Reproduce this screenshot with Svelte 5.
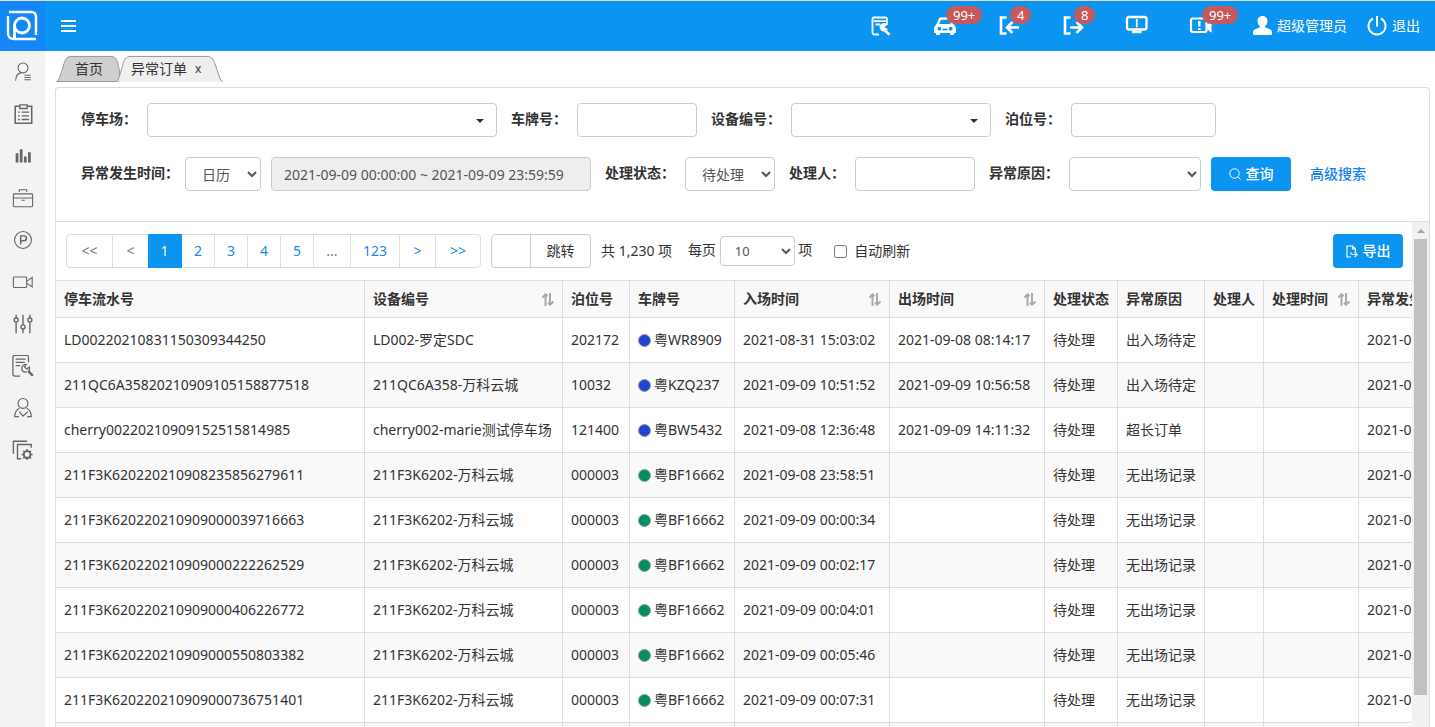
<script>
  const orders = [
    ['LD00220210831150309344250', 'LD002-罗定SDC', '202172', 'blue', '粤WR8909', '2021-08-31 15:03:02', '2021-09-08 08:14:17', '出入场待定'],
    ['211QC6A35820210909105158877518', '211QC6A358-万科云城', '10032', 'blue', '粤KZQ237', '2021-09-09 10:51:52', '2021-09-09 10:56:58', '出入场待定'],
    ['cherry00220210909152515814985', 'cherry002-marie测试停车场', '121400', 'blue', '粤BW5432', '2021-09-08 12:36:48', '2021-09-09 14:11:32', '超长订单'],
    ['211F3K620220210908235856279611', '211F3K6202-万科云城', '000003', 'green', '粤BF16662', '2021-09-08 23:58:51', '', '无出场记录'],
    ['211F3K620220210909000039716663', '211F3K6202-万科云城', '000003', 'green', '粤BF16662', '2021-09-09 00:00:34', '', '无出场记录'],
    ['211F3K620220210909000222262529', '211F3K6202-万科云城', '000003', 'green', '粤BF16662', '2021-09-09 00:02:17', '', '无出场记录'],
    ['211F3K620220210909000406226772', '211F3K6202-万科云城', '000003', 'green', '粤BF16662', '2021-09-09 00:04:01', '', '无出场记录'],
    ['211F3K620220210909000550803382', '211F3K6202-万科云城', '000003', 'green', '粤BF16662', '2021-09-09 00:05:46', '', '无出场记录'],
    ['211F3K620220210909000736751401', '211F3K6202-万科云城', '000003', 'green', '粤BF16662', '2021-09-09 00:07:31', '', '无出场记录'],
    ['', '', '', '', '', '', '', '']
  ];
  const columns = [
    { name: '停车流水号', width: 309 },
    { name: '设备编号', width: 198, sort: true },
    { name: '泊位号', width: 67 },
    { name: '车牌号', width: 105 },
    { name: '入场时间', width: 155, sort: true },
    { name: '出场时间', width: 155, sort: true },
    { name: '处理状态', width: 73 },
    { name: '异常原因', width: 87 },
    { name: '处理人', width: 59 },
    { name: '处理时间', width: 95, sort: true },
    { name: '异常发生时间', width: 155 }
  ];
  const pages = [
    { t: '<<', w: 46, off: true },
    { t: '<', w: 36, off: true },
    { t: '1', w: 34, on: true },
    { t: '2', w: 33 },
    { t: '3', w: 33 },
    { t: '4', w: 33 },
    { t: '5', w: 33 },
    { t: '...', w: 37, off: true },
    { t: '123', w: 49 },
    { t: '>', w: 36 },
    { t: '>>', w: 44 }
  ];
  const menu = ['user', 'clipboard', 'bars', 'case', 'parking', 'camera', 'sliders', 'repair', 'agent', 'copygear'];
  const alerts = [
    { icon: 'search' },
    { icon: 'car', count: '99+' },
    { icon: 'enter', count: '4' },
    { icon: 'exit', count: '8' },
    { icon: 'screen' },
    { icon: 'video', count: '99+' }
  ];
</script>

{#snippet glyph(name)}
  <svg class="glyph" viewBox="0 0 24 24" fill="none" stroke="currentColor" stroke-width="1.2" aria-hidden="true">
    {#if name === 'user'}
      <circle cx="12" cy="7.6" r="5.4" /><path d="M4 21.5C4 16.5 6.500 13.500 10 12.700M13.500 15.500h7M13.500 18h7M13.500 20.500h7" />
    {:else if name === 'clipboard'}
      <path d="M8 3.500H3.500v18.500h18V3.500H17" stroke-width="1.7" /><path d="M8.500 2h8v4h-8z" stroke-width="1.500" /><path d="M6.500 10h2M10.500 10h8M6.500 14h2M10.500 14h8M6.500 18h2M10.500 18h8" stroke-width="1.500" />
    {:else if name === 'bars'}
      <path d="M5.500 9v10M10 4.500v14.500M14.500 12.500v6.500M19 8v11" stroke-width="3" />
    {:else if name === 'case'}
      <rect x="1.500" y="7.500" width="21" height="14" rx="1" /><path d="M1.500 12h21M8 5.500V3h8v2.500M10.500 14.500h3.500" />
    {:else if name === 'parking'}
      <circle cx="12" cy="12" r="9.200" /><path d="M9.500 17v-9.500h3.500a2.700 2.700 0 0 1 0 5.400H9.500" stroke-width="1.600" />
    {:else if name === 'camera'}
      <rect x="1.500" y="6.500" width="14.500" height="11.500" rx="1" /><path d="M16.500 11l5.500-4v10.500l-5.500-4" />
    {:else if name === 'sliders'}
      <path d="M4.500 2v3.500M4.500 10v12M12 2V13M12 17.500V22M19.500 2v3.500M19.500 10v12" stroke-width="1.500" /><circle cx="4.500" cy="7.700" r="2.200" stroke-width="1.500" /><circle cx="12" cy="15.200" r="2.200" stroke-width="1.500" /><circle cx="19.500" cy="7.700" r="2.200" stroke-width="1.500" />
    {:else if name === 'repair'}
      <path d="M9 23H3a2 2 0 0 1-2-2V2.500a2 2 0 0 1 2-2h13a2 2 0 0 1 2 2V8M4 4.500h11M4 8h10M4 11.500h5" stroke-width="1.400" /><path d="M11 16.500c-1.200-3.500 1-6.300 4.500-6.200l-1.800 2.700 2.300 2.200 3-2c.6 2.200 0 3.600-.8 4.300l4.800 4.800M11 16.500c1.200 2 3.200 2.500 5 1.600" stroke-width="1.400" /><path d="M17.500 17.500l5 5" stroke-width="2.400" />
    {:else if name === 'agent'}
      <circle cx="12" cy="7" r="5.400" /><path d="M8 12.200c-3 1.500-5 5-5 9.300h4.500M16 12.200c3 1.500 5 5 5 9.300h-4.500M8 16l4 4.800 5.500-4.800" stroke-width="1.300" />
    {:else if name === 'copygear'}
      <path d="M1.500 16V2.500h15M10 21.500H6V6h15v3.500" stroke-width="1.500" /><circle cx="16.500" cy="17" r="3.700" stroke-width="2" /><path d="M16.500 11v3M16.500 20v3M10.500 17h3M19.500 17h3M12.300 12.800l2 2M18.700 19.200l2 2M20.700 12.800l-2 2M14.300 19.200l-2 2" stroke-width="1.700" />
    {:else if name === 'search'}
      <path d="M10 20.500H5.500a2 2 0 0 1-2-2V5a1.500 1.500 0 0 1 1.500-1.500h11.500A1.500 1.500 0 0 1 18 5v6M5 7.200h12M6.500 10.500h5" stroke-width="1.800" /><path d="M17.500 10.500a3.800 3.800 0 1 0 .8 4.500l-3.300-1z" fill="currentColor" stroke-width="1" /><path d="M15.500 16l5 4.800" stroke-width="2.600" />
    {:else if name === 'car'}
      <path d="M4.500 11l2-5q.6-1.500 2-1.500h7q1.400 0 2 1.500l2 5" stroke-width="2.500" /><path d="M3.500 10h17l2.500 3.500V18q0 1-1 1h-1v2h-4V19H7v2H3v-2H2q-1 0-1-1v-4.500z" fill="currentColor" stroke="none" /><circle cx="6.300" cy="14.700" r="1.900" fill="#0b94f0" stroke="none" /><circle cx="17.700" cy="14.700" r="1.900" fill="#0b94f0" stroke="none" /><path d="M9.500 15.500h5" stroke="#0b94f0" stroke-width="1.800" />
    {:else if name === 'enter'}
      <path d="M9.500 3.500H4v16h5.500M22 13.500H10.500M15.500 8L10 13.500l5.500 5.500" stroke-width="2.600" />
    {:else if name === 'exit'}
      <path d="M9.500 3.500H4v16h5.500M9 13.500H20.500M15.500 8L21 13.500l-5.500 5.500" stroke-width="2.600" />
    {:else if name === 'screen'}
      <rect x="2" y="3" width="19.500" height="12.500" rx="2" stroke-width="2.300" /><path d="M7 18h9.500" stroke-width="2.500" /><path d="M11.800 5v8.500" stroke-width="1.800" />
    {:else if name === 'video'}
      <rect x="2" y="4.500" width="15.500" height="13.500" rx="2" stroke-width="2.200" /><path d="M10.300 7v5.500M10.300 14v2" stroke-width="2.400" /><path d="M18 11.500l4-3v9l-4-3z" fill="currentColor" />
    {/if}
  </svg>
{/snippet}

<div class="app">
  <header>
    <a class="logo" href="#home" aria-label="首页">
      <svg viewBox="0 0 32 32" fill="none" stroke="#fff" stroke-width="2.400" aria-hidden="true">
        <path d="M3 2h22q5 0 5 5v18M30 29H8q-6 0-6-6V6" /><circle cx="16" cy="15.500" r="7.500" stroke-width="2.800" /><path d="M8.500 15.500V29" stroke-width="2.800" />
      </svg>
    </a>
    <button class="toggle" aria-label="菜单"><i></i><i></i><i></i></button>
    <nav class="alerts">
      {#each alerts as a}
        <a href="#{a.icon}" aria-label={a.icon}>{@render glyph(a.icon)}{#if a.count}<span class="badge">{a.count}</span>{/if}</a>
      {/each}
    </nav>
    <a class="account" href="#me">
      <svg width="19" height="20" viewBox="0 0 19 20" fill="#fff" aria-hidden="true"><path d="M9.500 0c3 0 5 2.200 5 5 0 2-.9 4-2.300 5.100v1.200l4.600 2c1.500.7 2.200 1.700 2.200 3.500v1.400q0 .8-1 .8H1q-1 0-1-.8v-1.400c0-1.800.7-2.800 2.200-3.500l4.600-2v-1.200C5.400 9 4.500 7 4.500 5c0-2.800 2-5 5-5z" /></svg>
      超级管理员
    </a>
    <a class="account" href="#logout">
      <svg width="20" height="20" viewBox="0 0 20 20" fill="none" stroke="#fff" stroke-width="2" aria-hidden="true"><path d="M6 2.500a8.500 8.500 0 1 0 8 0M10 0v10.500" /></svg>
      退出
    </a>
  </header>

  <div class="body">
    <aside>
      {#each menu as m}
        <a href="#{m}" aria-label={m}>{@render glyph(m)}</a>
      {/each}
    </aside>

    <main>
      <nav class="tabs">
        <a class="tab home" href="#home">
          <svg viewBox="0 0 64 27" preserveAspectRatio="none" aria-hidden="true"><path d="M.5 26.500q2-.5 3-4L9 5Q10.500.5 14 .5h42q3.500 0 5 4.500l2.500 10V26.500z" fill="#cfcfcf" stroke="#999" /></svg>
          <span>首页</span>
        </a>
        <div class="tab current">
          <svg viewBox="0 0 103 27" preserveAspectRatio="none" aria-hidden="true"><path d="M-4 26.500q2-1 3-4L4 5Q6 .5 9 .5h79q4 0 6 5l6 18q1 2.500 3 3" fill="#efefef" stroke="#999" /></svg>
          <span>异常订单</span><button aria-label="关闭">x</button>
        </div>
      </nav>

      <section class="panel">
        <form class="filters">
          <div class="line">
            <div class="field"><label for="lot">停车场：</label><select id="lot" class="caret w350"><option></option></select></div>
            <div class="field"><label for="plate">车牌号：</label><input id="plate" class="w120" type="text" /></div>
            <div class="field"><label for="device">设备编号：</label><select id="device" class="caret w200"><option></option></select></div>
            <div class="field"><label for="berth">泊位号：</label><input id="berth" class="w145" type="text" /></div>
          </div>
          <div class="line">
            <div class="field tight"><label for="period">异常发生时间：</label><select id="period" class="w76"><option>日历</option></select>
              <input class="w320 range" type="text" aria-label="时间范围" readonly value="2021-09-09 00:00:00 ~ 2021-09-09 23:59:59" /></div>
            <div class="field"><label for="state">处理状态：</label><select id="state" class="w90"><option>待处理</option></select></div>
            <div class="field"><label for="handler">处理人：</label><input id="handler" class="w120" type="text" /></div>
            <div class="field"><label for="reason">异常原因：</label><select id="reason" class="w132"><option></option></select>
              <button class="primary query" type="button">
                <svg width="12" height="12" viewBox="0 0 12 12" fill="none" stroke="#fff" aria-hidden="true"><circle cx="5.500" cy="5.500" r="4.700" /><path d="M8.800 8.800L11.500 11.500" /></svg>查询</button>
            </div>
            <a class="more" href="#advanced">高级搜索</a>
          </div>
        </form>

        <div class="results">
          <div class="content">
            <div class="toolbar">
              <div class="pager">
                {#each pages as p}
                  <button class:on={p.on} class:off={p.off} style:width="{p.w}px">{p.t}</button>
                {/each}
              </div>
              <div class="jump"><input type="text" aria-label="页码" /><button>跳转</button></div>
              <span class="total">共 1,230 项</span>
              <label class="size">每页 <select><option>10</option></select> 项</label>
              <label class="auto"><input type="checkbox" />自动刷新</label>
              <button class="primary export">
                <svg width="12" height="13" viewBox="0 0 12 13" fill="none" stroke="#fff" stroke-width="1.200" aria-hidden="true"><path d="M5 12H1V1h5.500L9.500 4v2.500M6.500 1v3h3M4.500 7.500q.5 2 3 2h3.500M8.700 7l2.500 2.500L8.700 12" /></svg>导出</button>
            </div>
            <table>
              <colgroup>{#each columns as c}<col style:width="{c.width}px" />{/each}</colgroup>
              <thead>
                <tr>
                  {#each columns as c}
                    <th><div class="head">{c.name}{#if c.sort}<svg width="12" height="13" viewBox="0 0 12 13" fill="none" stroke="#aaa" stroke-width="2" aria-hidden="true"><path d="M3.500 13V2M.3 4.500l3.200-3.200L5.500 3.300M8 0v11M6 9.700l2 2 3.500-3.200" /></svg>{/if}</div></th>
                  {/each}
                </tr>
              </thead>
              <tbody>
                {#each orders as o}
                  <tr>
                    <td>{o[0]}</td><td>{o[1]}</td><td>{o[2]}</td>
                    <td>{#if o[4]}<span class="plate"><i class={o[3]}></i>{o[4]}</span>{/if}</td>
                    <td>{o[5]}</td><td>{o[6]}</td><td>{o[0] ? '待处理' : ''}</td><td>{o[7]}</td><td></td><td></td><td>{o[5]}</td>
                  </tr>
                {/each}
              </tbody>
            </table>
          </div>
          <div class="scrollbar" aria-hidden="true"><i class="up"></i><i class="thumb"></i></div>
        </div>
      </section>
    </main>
  </div>
</div>

<style>
  :global(body) { margin: 0; overflow: hidden; }
  .app {
    height: 100vh; display: flex; flex-direction: column; overflow: hidden; background: #fff; color: #333;
    font: 14px/20px "Noto Sans", "Noto Sans CJK SC", sans-serif;
  }
  .app *, .app { box-sizing: border-box; }
  a { color: inherit; text-decoration: none; }
  button, input, select { font: inherit; color: inherit; margin: 0; }
  button { padding: 0; border: 0; background: none; }
  svg { flex: none; }
  header { flex: none; height: 51px; border-top: 1px solid #dedede; background: #0b94f0; color: #fff; display: flex; align-items: center; padding-right: 15px; }
  .logo { width: 45px; height: 50px; background: #1487f6; display: flex; align-items: center; padding-left: 6px; }
  .logo svg { width: 32px; height: 32px; }
  .toggle { margin-left: 16px; width: 15px; display: grid; gap: 3px; }
  .toggle i { height: 2px; background: #fff; }
  .alerts { margin-left: auto; display: flex; gap: 40px; margin-right: 40px; }
  .alerts a { position: relative; display: flex; }
  .alerts .glyph { width: 24px; height: 24px; }
  .badge { position: absolute; left: 13px; top: -8px; height: 18px; padding: 0 7px; border-radius: 9px; background: #c6595d; font-size: 13px; line-height: 18px; }
  .account { display: flex; align-items: center; gap: 5px; }
  .account + .account { margin-left: 20px; }
  .body { flex: 1; min-height: 0; display: flex; }
  aside { flex: none; width: 45px; background: #f3f3f3; color: #666; }
  aside a { height: 42px; display: grid; place-items: center; }
  aside .glyph { width: 22px; height: 22px; }
  main { flex: 1; min-width: 0; display: flex; flex-direction: column; padding: 5px 5px 0 10px; }
  .tabs { display: flex; height: 26px; flex: none; margin-bottom: 5px; padding-left: 1px; }
  .tab { position: relative; display: flex; align-items: center; }
  .tab svg { position: absolute; inset: 0; width: 100%; height: 100%; overflow: visible; }
  .tab span, .tab button { position: relative; }
  .home { width: 64px; padding-left: 19px; }
  .current { width: 103px; padding-left: 11px; gap: 8px; }
  .tab button { font-size: 12px; }
  .panel { flex: 1; min-height: 0; display: flex; flex-direction: column; border: 1px solid #ddd; border-bottom: 0; border-radius: 4px 4px 0 0; }
  .filters { flex: none; padding: 15px 0 30px 25px; display: grid; gap: 20px; border-bottom: 1px solid #ddd; }
  .line { display: flex; align-items: center; gap: 14px; white-space: nowrap; }
  .field { display: flex; align-items: center; gap: 10px; }
  .field label { font-weight: bold; padding-bottom: 2px; }
  .tight label { margin-right: -4px; }
  .field input, .field select { height: 34px; padding: 0 12px; border: 1px solid #ccc; border-radius: 4px; background-color: #fff; color: #555; }
  .field .range { background: #eee; }
  .field .caret { appearance: none; background: url("data:image/svg+xml,%3Csvg xmlns='http://www.w3.org/2000/svg' width='8' height='4'%3E%3Cpath d='M0 0h8L4 4z' fill='%23333'/%3E%3C/svg%3E") no-repeat right 12px top 15px #fff; }
  .w76 { width: 76px; } .w90 { width: 90px; } .w120 { width: 120px; } .w132 { width: 132px; } .w145 { width: 145px; }
  .w200 { width: 200px; } .w320 { width: 320px; } .w350 { width: 350px; }
  .primary { display: flex; align-items: center; justify-content: center; gap: 5px; height: 34px; border-radius: 4px; background: #0b94f0; color: #fff; font-weight: 500; }
  .query { width: 80px; }
  .more { color: #1583ed; font-weight: 500; margin-left: 5px; }
  .results { flex: 1; min-height: 0; display: flex; }
  .content { flex: 1; min-width: 0; overflow: hidden; }
  .toolbar { display: flex; align-items: center; padding: 12px 9px 12px 10px; white-space: nowrap; }
  .pager { display: flex; height: 34px; border: 1px solid #ddd; border-radius: 4px; }
  .pager button { border-right: 1px solid #ddd; color: #1a8ae8; }
  .pager button:last-child { border-right: 0; }
  .pager .off { color: #777; }
  .pager .on { background: #0b94f0; color: #fff; margin: -1px 0 -1px -1px; border-color: #0b94f0; }
  .jump { display: flex; margin: 0 10px; height: 34px; width: 100px; border: 1px solid #ccc; border-radius: 4px; }
  .jump input { width: 39px; border: 0; border-right: 1px solid #ccc; background: none; }
  .jump button { flex: 1; }
  .size { margin-left: 16px; }
  .size select { width: 75px; height: 30px; padding: 0 10px; font-size: 13px; color: #555; border: 1px solid #ccc; border-radius: 4px; background-color: #fff; vertical-align: middle; }
  .auto { display: flex; align-items: center; gap: 7px; margin-left: 22px; }
  .auto input { width: 13px; height: 13px; }
  .export { width: 70px; margin-left: auto; }
  table { width: 1458px; table-layout: fixed; border-collapse: separate; border-spacing: 0; border-top: 1px solid #ddd; white-space: nowrap; }
  th, td { padding: 0 8px; text-align: left; border-right: 1px solid #ddd; border-bottom: 1px solid #ddd; }
  th { height: 37px; background: #f9f9f9; }
  td { height: 45px; }
  tbody tr:nth-child(even) { background: #f9f9f9; }
  .head { display: flex; align-items: center; justify-content: space-between; }
  .plate { display: flex; align-items: center; gap: 3px; }
  .plate i { width: 13px; height: 13px; border-radius: 50%; border: 1px solid #8c9bb5; }
  .blue { background: #2344cb; }
  .green { background: #058f61; }
  .scrollbar { flex: none; width: 17px; background: #f1f1f1; display: flex; flex-direction: column; align-items: center; padding-bottom: 32px; }
  .up { margin: 7px 0 6px; border: 4px solid transparent; border-top: 0; border-bottom: 4px solid #a3a3a3; }
  .thumb { width: 13px; flex: 1; background: #c1c1c1; }
</style>
